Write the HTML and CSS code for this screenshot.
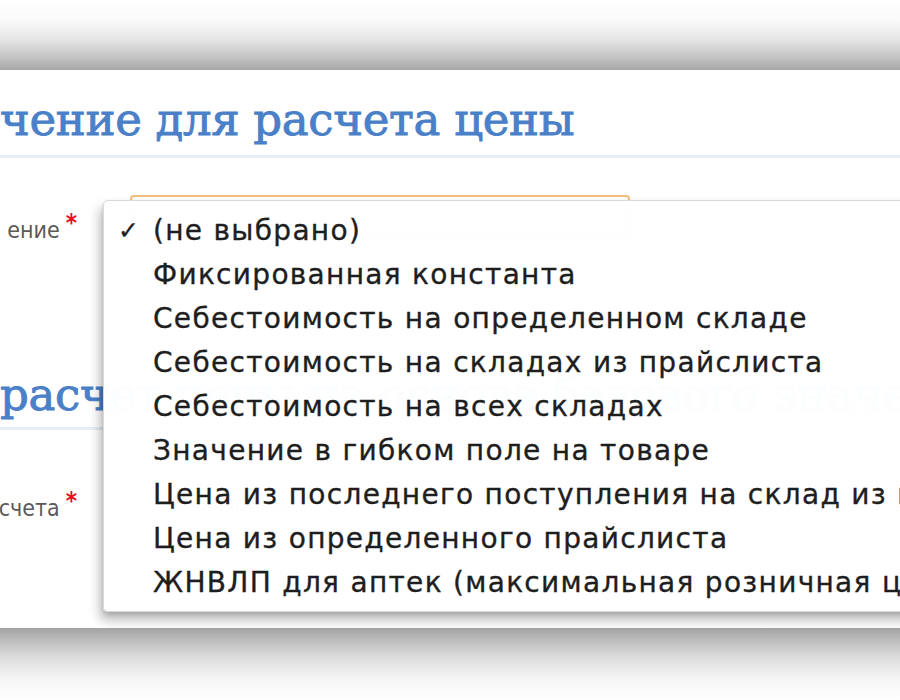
FILE: index.html
```html
<!DOCTYPE html>
<html lang="ru">
<head>
<meta charset="utf-8">
<title>Значение для расчета цены</title>
<link rel="stylesheet" href="styles.css">
</head>
<body>
<div class="shade-top"></div>
<div class="panel">
  <h2 class="section-title first">чение для расчета цены</h2>
  <div class="form-row row-one">
    <div class="label"><span>ение</span><span class="req">*</span></div>
    <div class="select focused"><span class="value"></span><span class="arrows">⇕</span></div>
  </div>
  <h2 class="section-title second">расчет цены на основе базового значения</h2>
  <div class="form-row row-two">
    <div class="label"><span>счета</span><span class="req">*</span></div>
    <div class="select"><span class="value">(не выбрано)</span><span class="arrows">⇕</span></div>
  </div>

  <ul class="menu">
    <li class="checked"><span class="check">✓</span>(не выбрано)</li>
    <li>Фиксированная константа</li>
    <li>Себестоимость на определенном складе</li>
    <li>Себестоимость на складах из прайслиста</li>
    <li>Себестоимость на всех складах</li>
    <li>Значение в гибком поле на товаре</li>
    <li>Цена из последнего поступления на склад из прайслиста</li>
    <li>Цена из определенного прайслиста</li>
    <li>ЖНВЛП для аптек (максимальная розничная цена)</li>
  </ul>
</div>
<div class="shade-bottom"></div>
</body>
</html>
```
FILE: styles.css
```css
html, body {
  margin: 0;
  padding: 0;
  background: #ffffff;
  overflow: hidden;
  width: 900px;
  height: 700px;
}

.shade-top {
  height: 70px;
  background: linear-gradient(to bottom, #ffffff 0px, #fafafa 20px, #e4e4e4 40px, #c2c2c2 58px, #a8a8a8 70px);
}

.panel {
  position: relative;
  height: 558px;
  background: #ffffff;
  overflow: hidden;
  padding-top: 20px;
  box-sizing: border-box;
}

.shade-bottom {
  height: 72px;
  background: linear-gradient(to bottom, #a2a2a2 0px, #bcbcbc 12px, #dddddd 30px, #f6f6f6 52px, #ffffff 72px);
}

.section-title {
  margin: 0;
  font-family: "DejaVu Serif", "Liberation Serif", serif;
  font-weight: normal;
  font-size: 45px;
  line-height: 60px;
  color: #4a80c8;
  white-space: nowrap;
  padding-bottom: 5px;
  border-bottom: 3px solid #e6edf6;
  letter-spacing: -0.3px;
  -webkit-text-stroke: 0.9px #4a80c8;
}

.section-title.second {
  margin-top: 126px;
  padding-bottom: 2px;
}

.form-row {
  display: flex;
  align-items: center;
  height: 44px;
}

.row-one { margin-top: 37px; }
.row-two { margin-top: 51px; }

.label {
  width: 77px;
  display: flex;
  justify-content: flex-end;
  align-items: flex-start;
  gap: 6px;
  font-family: "DejaVu Sans Condensed", "DejaVu Sans", sans-serif;
  font-size: 23px;
  color: #5a5a5a;
  white-space: nowrap;
}

.row-one .label { padding-top: 26px; }
.row-two .label { padding-top: 10px; }

.req {
  color: #e8101a;
  font-size: 24px;
  font-weight: bold;
  line-height: 1;
  margin-top: -6px;
}

.select {
  margin-left: 53px;
  width: 500px;
  height: 44px;
  box-sizing: border-box;
  border: 1px solid #d8d8d8;
  border-radius: 4px;
  display: flex;
  align-items: center;
  justify-content: space-between;
  padding: 0 12px 0 24px;
  font-family: "DejaVu Sans", sans-serif;
  font-size: 20px;
  color: #888888;
}

.select.focused {
  border: 2px solid #efbd7c;
}

.arrows {
  color: #c8c8c8;
  font-size: 20px;
}

.menu {
  position: absolute;
  left: 103px;
  top: 130px;
  width: 860px;
  margin: 0;
  padding: 8px 0 6px 0;
  list-style: none;
  background: rgba(255, 255, 255, 0.982);
  border: 1px solid #d9d9d9;
  border-radius: 5px;
  box-shadow: -3px 8px 12px rgba(0, 0, 0, 0.28), 0 2px 4px rgba(0, 0, 0, 0.12);
  font-family: "DejaVu Sans", "Noto Sans", sans-serif;
  font-size: 28px;
  color: #1e1e1e;
}

.menu li {
  position: relative;
  height: 44px;
  line-height: 44px;
  padding-left: 49px;
  white-space: nowrap;
  letter-spacing: 1.3px;
  -webkit-text-stroke: 0.35px #1e1e1e;
}

.check {
  position: absolute;
  left: 14px;
  top: 0;
  font-size: 25px;
  font-weight: bold;
  letter-spacing: 0;
}
```
